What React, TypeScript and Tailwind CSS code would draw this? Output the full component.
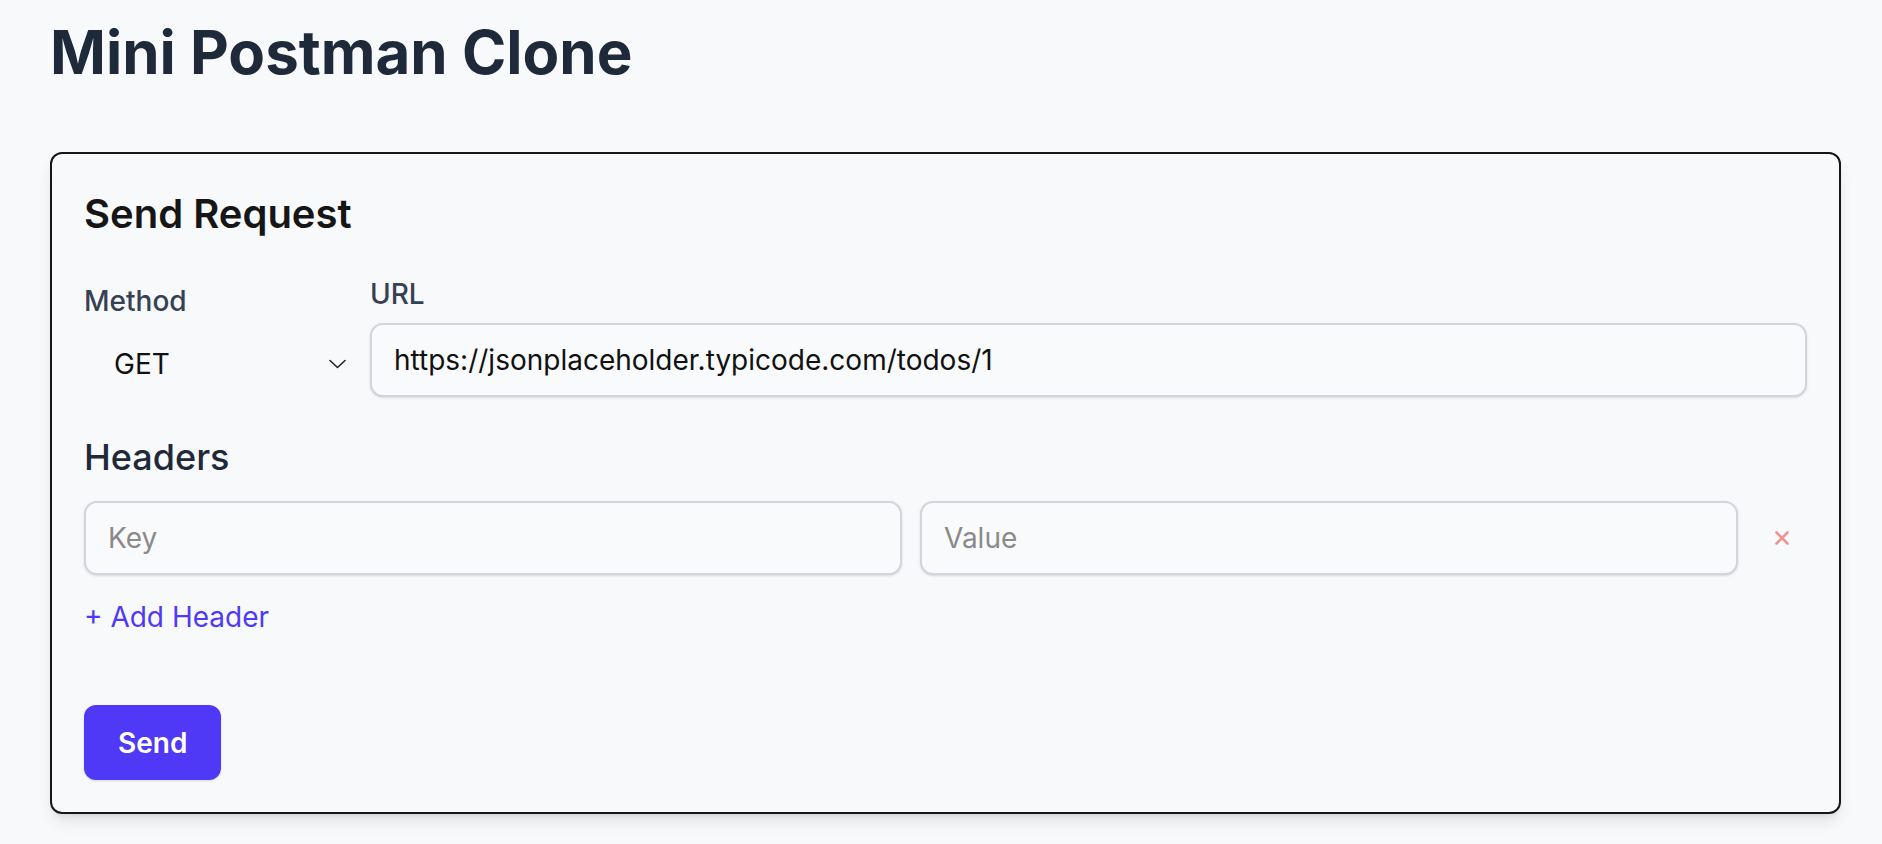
import { useState } from 'react';

type Header = { id: number; key: string; value: string };

export default function App() {
  const [method, setMethod] = useState('GET');
  const [url, setUrl] = useState('https://jsonplaceholder.typicode.com/todos/1');
  const [headers, setHeaders] = useState<Header[]>([{ id: 1, key: '', value: '' }]);

  const addHeader = () => {
    setHeaders([...headers, { id: Date.now(), key: '', value: '' }]);
  };

  const removeHeader = (id: number) => {
    setHeaders(headers.filter((h) => h.id !== id));
  };

  const updateHeader = (id: number, field: 'key' | 'value', val: string) => {
    setHeaders(headers.map((h) => (h.id === id ? { ...h, [field]: val } : h)));
  };

  return (
    <div className="min-h-screen bg-[#f8f9fb] pl-[50px] pr-[41px] pt-[22px] pb-10 font-['Inter','Liberation_Sans',sans-serif]">
      <h1 className="text-6xl leading-none font-bold text-gray-800">Mini Postman Clone</h1>

      {/* Request card */}
      <div className="mt-[70px] rounded-xl border-2 border-[#161616] p-8 shadow-lg">
        <h2 className="mb-8 text-[40px] leading-[56px] font-semibold text-[#161616]">Send Request</h2>

        {/* Method + URL */}
        <div className="flex items-end gap-4">
          <div className="w-[270px] shrink-0">
            <label className="mb-[9px] block text-[28px] leading-[40px] font-medium text-gray-700">Method</label>
            <div className="relative">
              <select
                value={method}
                onChange={(e) => setMethod(e.target.value)}
                className="h-[67px] w-full appearance-none bg-transparent pl-[30px] text-[28px] text-[#111] outline-none"
              >
                <option>GET</option>
                <option>POST</option>
                <option>PUT</option>
                <option>DELETE</option>
              </select>
              <svg
                className="pointer-events-none absolute top-1/2 right-2 -translate-y-1/2"
                width="17"
                height="10"
                viewBox="0 0 17 10"
                fill="none"
                stroke="#222"
                strokeWidth="1.6"
                strokeLinecap="round"
                strokeLinejoin="round"
              >
                <path d="M1 1.5L8.5 8.5L16 1.5" />
              </svg>
            </div>
          </div>
          <div className="flex-1">
            <label className="mb-[9px] block text-[28px] leading-[40px] font-medium text-gray-700">URL</label>
            <input
              type="text"
              value={url}
              onChange={(e) => setUrl(e.target.value)}
              className="h-[74px] w-full rounded-[13px] border-2 border-gray-300 bg-[#f9fafc] px-[22px] text-[28px] text-[#111] shadow-sm outline-none"
            />
          </div>
        </div>

        {/* Headers */}
        <h3 className="mt-[36px] mb-5 text-[36px] leading-[48px] font-medium text-gray-800">Headers</h3>
        <div className="space-y-4">
          {headers.map((h) => (
            <div key={h.id} className="flex items-center gap-[18px]">
              <input
                type="text"
                placeholder="Key"
                value={h.key}
                onChange={(e) => updateHeader(h.id, 'key', e.target.value)}
                className="h-[74px] min-w-0 flex-1 rounded-[13px] border-2 border-gray-300 bg-[#f9fafc] px-[22px] text-[28px] text-[#111] shadow-sm outline-none placeholder:text-[#8a8a8a]"
              />
              <input
                type="text"
                placeholder="Value"
                value={h.value}
                onChange={(e) => updateHeader(h.id, 'value', e.target.value)}
                className="h-[74px] min-w-0 flex-1 rounded-[13px] border-2 border-gray-300 bg-[#f9fafc] px-[22px] text-[28px] text-[#111] shadow-sm outline-none placeholder:text-[#8a8a8a]"
              />
              <button
                onClick={() => removeHeader(h.id)}
                className="flex h-[51px] w-[51px] shrink-0 items-center justify-center"
              >
                <svg width="16" height="16" viewBox="0 0 16 16" fill="none" stroke="#ec9494" strokeWidth="2.6" strokeLinecap="round">
                  <path d="M2.5 2.5L13.5 13.5M13.5 2.5L2.5 13.5" />
                </svg>
              </button>
            </div>
          ))}
        </div>
        <button onClick={addHeader} className="mt-[22px] block text-[28px] leading-[40px] text-indigo-600">
          + Add Header
        </button>

        <div className="mt-[68px]">
          <button className="h-[75px] rounded-xl bg-indigo-600 px-[34px] text-[28px] font-semibold text-white shadow-sm">
            Send
          </button>
        </div>
      </div>
    </div>
  );
}
